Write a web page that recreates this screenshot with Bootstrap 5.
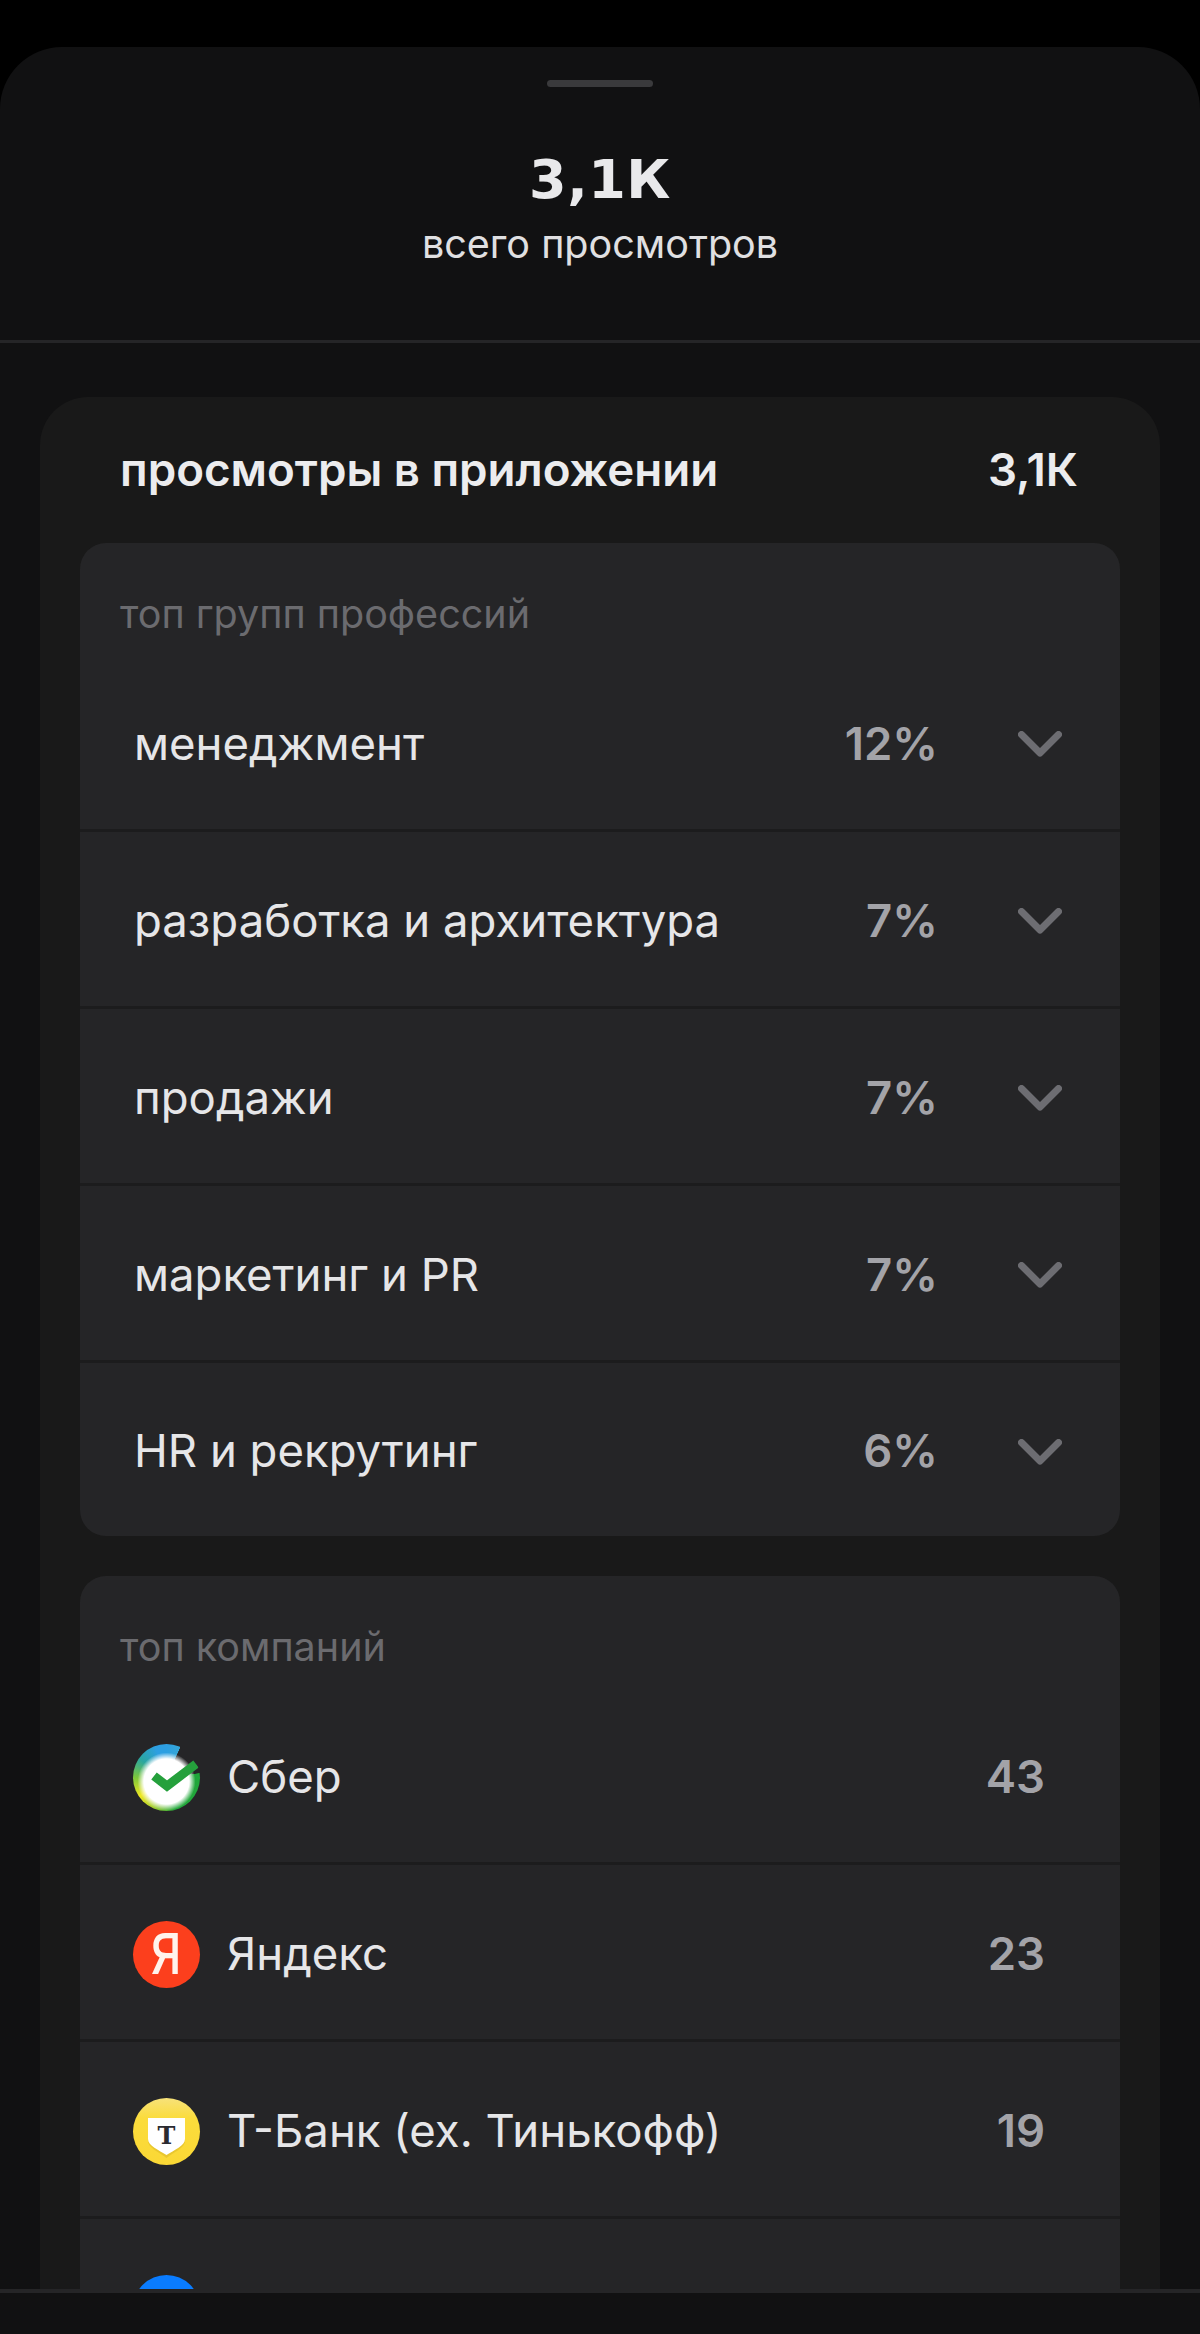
<!DOCTYPE html>
<html lang="ru">
<head>
    <meta charset="UTF-8">
    <meta name="viewport" content="width=device-width, initial-scale=1.0">
    <title>Просмотры</title>
    <link rel="stylesheet" href="https://cdn.jsdelivr.net/npm/bootstrap@5.3.0/dist/css/bootstrap.min.css">
    <style>
        html, body { height: 2334px; }
        body { background: #000; font-family: Inter, "Liberation Sans", sans-serif; color: #e6e6e8; overflow: hidden; }
        .screen { height: 2334px; padding-top: 47px; }
        .sheet { height: 100%; background: #111112; border-radius: 62px 62px 0 0; overflow: hidden; }
        .grabber { width: 106px; height: 7px; background: #3a3a3c; border-radius: 4px; margin: 33px auto 0; flex: none; }
        .summary { height: 256px; flex: none; border-bottom: 3px solid #252527; padding-top: 61px; }
        .total { font-family: "DejaVu Sans", sans-serif; font-weight: 700; font-size: 54px; line-height: 64px; letter-spacing: .5px; color: #e9e9eb; }
        .total-label { font-size: 39.5px; line-height: 48px; margin-top: 8px; color: #e0e0e2; }
        .scroll-area { min-height: 0; padding: 54px 40px 0; }
        .panel { background: #191919; border-radius: 48px 48px 0 0; height: 100%; padding: 0 40px; overflow: hidden; }
        .panel-head { height: 146px; padding: 0 42px 0 40px; font-size: 45.7px; font-weight: 600; color: #ececee; }
        .group { background: #252527; border-radius: 26px; margin-bottom: 40px; }
        .group-title { font-size: 39.5px; line-height: 44px; color: #6b6b6f; padding: 49px 40px 0; height: 112px; }
        .group-row { height: 177px; border-bottom: 3px solid #1c1c1d; padding: 4px 58px 0 54px; font-size: 45.5px; }
        .group-row:last-child { border-bottom: 0; height: 173px; }
        .row-name { color: #e6e6e8; }
        .row-value { color: #a3a3a8; font-weight: 600; }
        .chevron { width: 44px; height: 26px; margin-left: 80px; flex: none; }
        .company-row { height: 177px; border-bottom: 3px solid #1c1c1d; padding: 4px 75px 0 53px; font-size: 45.5px; }
        .logo-box { width: 67px; height: 67px; margin-right: 27px; border-radius: 50%; overflow: hidden; }
        .logo-sber { background: conic-gradient(#2d9fe2 0deg, #35a6d8 24deg, transparent 25deg, transparent 82deg, #1fa63a 83deg, #24a83c 165deg, #a8d030 205deg, #efe722 235deg, #7cc63c 270deg, #2aa6a0 305deg, #2d9fe2 340deg); }
        .logo-ya { background: #fc3f1d; color: #fff3ec; font-weight: 500; font-size: 56px; line-height: 67px; text-align: center; }
        .ya-letter { display: inline-block; transform: scaleX(.85); }
        .logo-tb { background: linear-gradient(#f7e27a, #fbdc3c 30%, #fbd835); }
        .logo-blue { background: #0a7cff; }
        .page-foot { height: 45px; background: #111112; border-top: 4px solid #252527; flex: none; }
    </style>
</head>
<body>
    <div class="screen">
        <div class="sheet d-flex flex-column">
            <div class="grabber"></div>
            <div class="summary text-center">
                <div class="total">3,1К</div>
                <div class="total-label">всего просмотров</div>
            </div>
            <div class="scroll-area flex-grow-1">
                <div class="panel">
                    <div class="panel-head d-flex justify-content-between align-items-center">
                        <span>просмотры в приложении</span>
                        <span>3,1К</span>
                    </div>

                    <div class="group">
                        <div class="group-title">топ групп профессий</div>
                        <div class="group-row d-flex align-items-center">
                            <span class="row-name flex-grow-1">менеджмент</span>
                            <span class="row-value">12%</span>
                            <svg class="chevron" viewBox="0 0 44 26"><path d="M3.5 3.5 L22 22 L40.5 3.5" fill="none" stroke="#6d6d72" stroke-width="7" stroke-linecap="round" stroke-linejoin="round"/></svg>
                        </div>
                        <div class="group-row d-flex align-items-center">
                            <span class="row-name flex-grow-1">разработка и архитектура</span>
                            <span class="row-value">7%</span>
                            <svg class="chevron" viewBox="0 0 44 26"><path d="M3.5 3.5 L22 22 L40.5 3.5" fill="none" stroke="#6d6d72" stroke-width="7" stroke-linecap="round" stroke-linejoin="round"/></svg>
                        </div>
                        <div class="group-row d-flex align-items-center">
                            <span class="row-name flex-grow-1">продажи</span>
                            <span class="row-value">7%</span>
                            <svg class="chevron" viewBox="0 0 44 26"><path d="M3.5 3.5 L22 22 L40.5 3.5" fill="none" stroke="#6d6d72" stroke-width="7" stroke-linecap="round" stroke-linejoin="round"/></svg>
                        </div>
                        <div class="group-row d-flex align-items-center">
                            <span class="row-name flex-grow-1">маркетинг и PR</span>
                            <span class="row-value">7%</span>
                            <svg class="chevron" viewBox="0 0 44 26"><path d="M3.5 3.5 L22 22 L40.5 3.5" fill="none" stroke="#6d6d72" stroke-width="7" stroke-linecap="round" stroke-linejoin="round"/></svg>
                        </div>
                        <div class="group-row d-flex align-items-center">
                            <span class="row-name flex-grow-1">HR и рекрутинг</span>
                            <span class="row-value">6%</span>
                            <svg class="chevron" viewBox="0 0 44 26"><path d="M3.5 3.5 L22 22 L40.5 3.5" fill="none" stroke="#6d6d72" stroke-width="7" stroke-linecap="round" stroke-linejoin="round"/></svg>
                        </div>
                    </div>

                    <div class="group">
                        <div class="group-title">топ компаний</div>
                        <div class="company-row d-flex align-items-center">
                            <div class="logo-box logo-sber flex-shrink-0">
                                <svg width="67" height="67" viewBox="0 0 67 67">
                                    <defs><radialGradient id="sberCore"><stop offset=".78" stop-color="#fff"/><stop offset="1" stop-color="#fff" stop-opacity="0"/></radialGradient></defs>
                                    <circle cx="33.5" cy="33.5" r="29" fill="url(#sberCore)"/>
                                    <path d="M21 28 L34 38 L63 16" fill="none" stroke="#25a03c" stroke-width="9"/>
                                </svg>
                            </div>
                            <span class="row-name flex-grow-1">Сбер</span>
                            <span class="row-value">43</span>
                        </div>
                        <div class="company-row d-flex align-items-center">
                            <div class="logo-box logo-ya flex-shrink-0"><span class="ya-letter">Я</span></div>
                            <span class="row-name flex-grow-1">Яндекс</span>
                            <span class="row-value">23</span>
                        </div>
                        <div class="company-row d-flex align-items-center">
                            <div class="logo-box logo-tb flex-shrink-0">
                                <svg width="67" height="67" viewBox="0 0 67 67">
                                    <path d="M15 18 H52 V39 C52 46 41 50 33.5 56 C26 50 15 46 15 39Z" fill="#c9a520" opacity=".35"/>
                                    <path d="M15 16 H52 V37 C52 44 41 48 33.5 53 C26 48 15 44 15 37Z" fill="#fff"/>
                                    <text x="33.5" y="42" text-anchor="middle" font-family="'DejaVu Serif', serif" font-weight="700" font-size="24" fill="#2b2b30">Т</text>
                                </svg>
                            </div>
                            <span class="row-name flex-grow-1">Т-Банк (ех. Тинькофф)</span>
                            <span class="row-value">19</span>
                        </div>
                        <div class="company-row d-flex align-items-center">
                            <div class="logo-box logo-blue flex-shrink-0"></div>
                        </div>
                    </div>
                </div>
            </div>
            <div class="page-foot"></div>
        </div>
    </div>
    <script src="https://cdn.jsdelivr.net/npm/bootstrap@5.3.0/dist/js/bootstrap.bundle.min.js"></script>
</body>
</html>
